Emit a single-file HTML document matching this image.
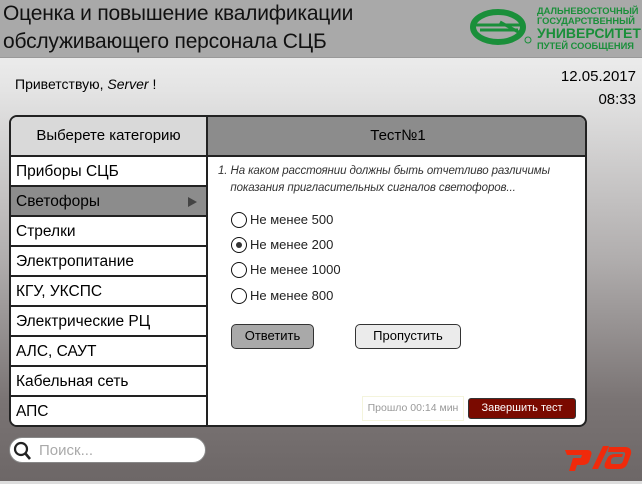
<!DOCTYPE html>
<html><head><meta charset="utf-8"><style>
*{margin:0;padding:0;box-sizing:border-box}
body{width:642px;height:484px;overflow:hidden;font-family:"Liberation Sans","Noto Sans CJK SC",sans-serif;position:relative;background:linear-gradient(#ebebeb 58px,#e4e4e4 90px,#b0adad 260px,#7a7474 400px,#6d6767 480px);}
.hdr{position:absolute;left:0;top:0;width:642px;height:58px;background:#a9a9a9;border-bottom:1px solid #999}
.t{position:absolute;left:3px;font-size:21px;color:#111;letter-spacing:-0.2px}
.abs{position:absolute}
.panel{position:absolute;left:9px;top:115px;width:578px;height:312px;border:2px solid #222;border-radius:8px;background:#fff;overflow:hidden}
.lh{position:absolute;left:0;top:0;width:197px;height:40px;background:#d9d9d9;border-right:2px solid #222;border-bottom:2px solid #222;font-size:15px;text-align:center;line-height:38px}
.rh{position:absolute;left:197px;top:0;width:380px;height:40px;background:#8c8c8c;border-bottom:2px solid #222;font-size:15px;text-align:center;line-height:38px}
.lc{position:absolute;left:0;top:40px;width:197px;height:272px;border-right:2px solid #222}
.row{height:30px;border-bottom:2px solid #222;font-size:15.5px;line-height:29px;padding-left:5px;position:relative;background:#fff}
.row.sel{background:#8c8c8c}
.q{position:absolute;font-size:11.5px;font-style:italic;color:#333;line-height:17px;letter-spacing:-0.1px}
.opt{position:absolute;font-size:13px;color:#222}
.rad{display:inline-block;width:16px;height:16px;border:1.5px solid #111;border-radius:50%;vertical-align:-4px;margin-right:3px;position:relative}
.btn{position:absolute;height:25px;border:1.5px solid #333;border-radius:5px;font-size:13px;text-align:center;line-height:22px}
</style></head><body>
<div class="hdr">
<div class="t" style="top:2px">Оценка и повышение квалификации</div>
<div class="t" style="top:30px">обслуживающего персонала СЦБ</div>
<svg class="abs" style="left:470px;top:8px" width="62" height="38" viewBox="0 0 62 38">
<ellipse cx="28" cy="19" rx="25" ry="15" fill="none" stroke="#1a8f3a" stroke-width="6"/>
<path d="M6 17 H50 M10 22 H48 M30 14 L52 26" stroke="#1a8f3a" stroke-width="3" fill="none"/>
<circle cx="58" cy="32" r="3" fill="none" stroke="#1a8f3a" stroke-width="1"/>
</svg>
<div class="abs" style="left:537px;top:6px;color:#1a8f3a;font-weight:bold;font-size:9.3px;line-height:10px">ДАЛЬНЕВОСТОЧНЫЙ<br>ГОСУДАРСТВЕННЫЙ<br><span style="font-size:14px;line-height:15px">УНИВЕРСИТЕТ</span><br>ПУТЕЙ СООБЩЕНИЯ</div>
</div>
<div class="abs" style="left:15px;top:76px;font-size:14px">Приветствую, <i>Server</i> !</div>
<div class="abs" style="right:6px;top:65px;font-size:15px;text-align:right;line-height:23px">12.05.2017<br>08:33</div>
<div class="panel">
<div class="lh">Выберете категорию</div>
<div class="rh">Тест№1</div>
<div class="lc">
<div class="row">Приборы СЦБ</div>
<div class="row sel">Светофоры<span style="position:absolute;right:9px;top:10px;border-left:9px solid #444;border-top:5px solid transparent;border-bottom:5px solid transparent"></span></div>
<div class="row">Стрелки</div>
<div class="row">Электропитание</div>
<div class="row">КГУ, УКСПС</div>
<div class="row">Электрические РЦ</div>
<div class="row">АЛС, САУТ</div>
<div class="row">Кабельная сеть</div>
<div class="row" style="border-bottom:none">АПС</div>
</div>
</div>
<div class="q" style="left:218px;top:163px">1. На каком расстоянии должны быть отчетливо различимы<br>&nbsp;&nbsp;&nbsp;&nbsp;показания пригласительных сигналов светофоров...</div>
<div class="opt" style="left:231px;top:212px"><span class="rad"></span>Не менее 500</div>
<div class="opt" style="left:231px;top:237px"><span class="rad"><span style="position:absolute;left:3.5px;top:3.5px;width:6px;height:6px;border-radius:50%;background:#333"></span></span>Не менее 200</div>
<div class="opt" style="left:231px;top:262px"><span class="rad"></span>Не менее 1000</div>
<div class="opt" style="left:231px;top:288px"><span class="rad"></span>Не менее 800</div>
<div class="btn" style="left:231px;top:324px;width:83px;background:#a9a9a9">Ответить</div>
<div class="btn" style="left:355px;top:324px;width:106px;background:#ebebeb">Пропустить</div>
<div class="abs" style="left:362px;top:396px;width:102px;height:25px;border:1px solid #f4f4dc;font-size:10.5px;color:#999;line-height:23px;text-align:center">Прошло 00:14 мин</div>
<div class="abs" style="left:468px;top:398px;width:108px;height:21px;background:#7a0a00;border:1px solid #333;border-radius:3px;color:#fff;font-size:11px;line-height:19px;text-align:center">Завершить тест</div>
<div class="abs" style="left:9px;top:437px;width:197px;height:26px;background:#fff;border-radius:13px;border:1px solid #888"></div>
<svg class="abs" style="left:13px;top:441px" width="20" height="20" viewBox="0 0 20 20"><circle cx="8" cy="8" r="6" fill="none" stroke="#222" stroke-width="2.2"/><path d="M12 12 L17 18" stroke="#222" stroke-width="2.6"/></svg>
<div class="abs" style="left:39px;top:442px;font-size:15px;color:#aaa">Поиск...</div>
<svg class="abs" style="left:565px;top:442px" width="68" height="30" viewBox="0 0 68 30">
<path d="M0 8 H22 Q28 8 26 14 L24 20 Q22 23 17 23 H12 L10 29 H4 L8 16 H16 L17 13 H2 Z" fill="#f02a0b"/>
<path d="M27 27 L38 4 H44 L33 27 Z" fill="#f02a0b"/>
<path d="M44 5 H60 Q67 5 66 12 L63 20 Q61 27 54 27 H44 Q38 27 40 21 L42 17 Q44 12 50 12 H58 L57 15 H50 Q47 15 46 18 L46 20 Q45 22 48 22 H54 Q57 22 58 19 L60 13 Q61 10 58 10 H43 Z" fill="#f02a0b"/>
</svg>
<div class="abs" style="left:0;top:481px;width:642px;height:3px;background:#ddd"></div>
</body></html>
